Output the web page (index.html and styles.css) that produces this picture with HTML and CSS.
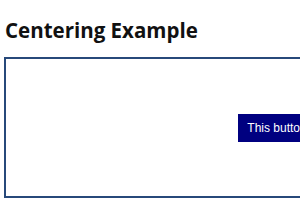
FILE: index.html
```html
<!DOCTYPE html>
<html lang="en">

<head>
  <meta charset="UTF-8">
  <meta name="viewport" content="width=device-width, initial-scale=1.0">
  <title>Centering Example</title>
  <link rel="stylesheet" href="styles.css">
</head>

<body>

  <h1 class="page_title">Centering Example</h1>

  <div class="center_box">
    <button class="center_button">This button is centered</button>
  </div>

</body>

</html>
```

FILE: styles.css
```css
body {
  margin: 0;
  padding: 0 4px;
  font-family: "Open Sans", sans-serif;
  background: #fff;
  overflow: hidden;
}

.page_title {
  font-size: 20.5px;
  font-weight: 700;
  color: #111;
  margin: 16px 0 13px 1px;
  line-height: 28px;
}

.center_box {
  width: 604px;
  height: 137px;
  border: 2px solid #27497a;
  display: flex;
  justify-content: center;
  align-items: center;
}

.center_button {
  font-family: "Liberation Sans", Arial, sans-serif;
  font-size: 12px;
  color: #fff;
  background-color: #000080;
  border: none;
  padding: 7px 9px;
  height: 28px;
}
```
